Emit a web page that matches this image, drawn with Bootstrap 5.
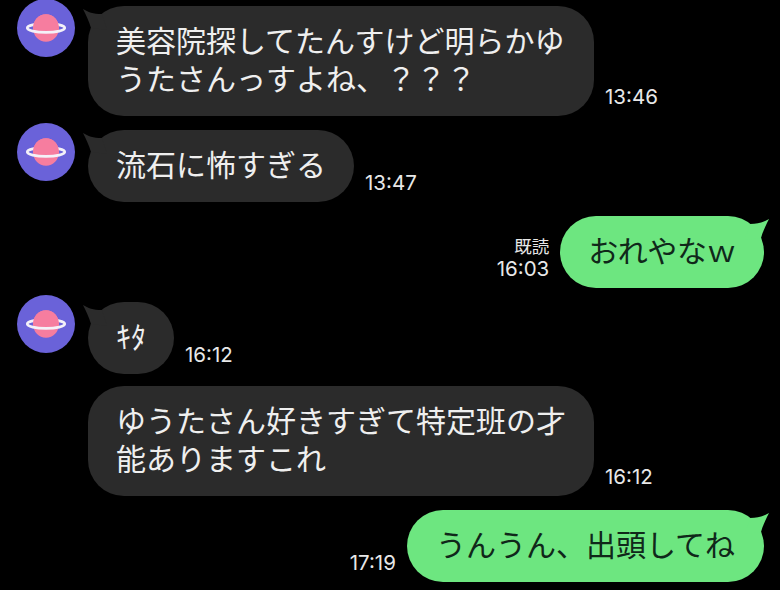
<!doctype html>
<html lang="ja">
<head>
<meta charset="utf-8">
<title>Chat</title>
<link rel="stylesheet" href="https://cdn.jsdelivr.net/npm/bootstrap@5.3.0/dist/css/bootstrap.min.css">
<style>
html,body{background:#000;margin:0;height:590px;overflow:hidden}
.chat-log{padding:6px 16px 0 17px;gap:14px;font-family:"Noto Sans CJK JP",sans-serif}
.chat-row.tight{margin-top:-2px}
.chat-avatar{width:58px;height:58px;flex:none;margin:-7px 13px 0 0}
.chat-spacer{width:71px;flex:none}
.chat-bubble{position:relative;font-size:30px;line-height:38px;padding:14px 28px 20px;border-radius:36px;flex:none}
.chat-bubble.in{background:#2b2b2b;color:#efefef;max-width:506px}
.chat-bubble.out{background:#6de680;color:#10281a;padding-left:29px;padding-right:29px}
.chat-bubble.out.snug{padding-left:28px;padding-right:28px;letter-spacing:-.45px}
.chat-tail{position:absolute;top:0;width:26px;height:30px}
.in .chat-tail{left:-6px}
.out .chat-tail{right:-6px}
.chat-time{font-family:Inter,"Liberation Sans",sans-serif;font-size:20.5px;line-height:22px;color:#e8e8e8;margin-bottom:8px}
.in + .chat-time{margin-left:11px}
.chat-time.mine{margin-right:11px;text-align:right}
.chat-read{font-family:"Noto Sans CJK JP",sans-serif;font-size:17.5px;line-height:22px;margin-bottom:1px}
</style>
</head>
<body>
<svg width="0" height="0" class="d-block">
<defs>
<symbol id="planet" viewBox="0 0 58 58">
<circle cx="29" cy="29" r="29" fill="#6a62d9"/>
<ellipse cx="29" cy="29" rx="13" ry="13.8" fill="#f67d9f"/>
<ellipse cx="29" cy="29" rx="18.7" ry="4.3" fill="none" stroke="#f4f1f8" stroke-width="2.8"/>
<path d="M16 29c0-7.600 5.800-13.800 13-13.800S42 21.400 42 29c0 .4 0 .9-.1 1.300-3.400.6-7.800 1-12.900 1s-9.500-.4-12.900-1c-.1-.4-.1-.9-.1-1.300z" fill="#f67d9f"/>
</symbol>
<symbol id="tail-in" viewBox="0 0 26 30"><path d="M1 3c5 3 10 5 19 5l5 16-16-2C7 15 4 9 1 3z" fill="#2b2b2b"/></symbol>
<symbol id="tail-out" viewBox="0 0 26 30"><path d="M25 3c-5 3-10 5-19 5L1 24l16-2c2-7 5-13 8-19z" fill="#6de680"/></symbol>
</defs>
</svg>
<main class="chat-log d-flex flex-column">
  <div class="chat-row d-flex align-items-end">
    <svg class="chat-avatar align-self-start"><use href="#planet"/></svg>
    <div class="chat-bubble in">美容院探してたんすけど明らかゆうたさんっすよね、？？？<svg class="chat-tail"><use href="#tail-in"/></svg></div>
    <div class="chat-time">13:46</div>
  </div>
  <div class="chat-row d-flex align-items-end">
    <svg class="chat-avatar align-self-start"><use href="#planet"/></svg>
    <div class="chat-bubble in">流石に怖すぎる<svg class="chat-tail"><use href="#tail-in"/></svg></div>
    <div class="chat-time">13:47</div>
  </div>
  <div class="chat-row d-flex align-items-end justify-content-end">
    <div class="chat-time mine"><div class="chat-read">既読</div>16:03</div>
    <div class="chat-bubble out snug">おれやなｗ<svg class="chat-tail"><use href="#tail-out"/></svg></div>
  </div>
  <div class="chat-row d-flex align-items-end">
    <svg class="chat-avatar align-self-start"><use href="#planet"/></svg>
    <div class="chat-bubble in">ｷﾀ<svg class="chat-tail"><use href="#tail-in"/></svg></div>
    <div class="chat-time">16:12</div>
  </div>
  <div class="chat-row tight d-flex align-items-end">
    <div class="chat-spacer"></div>
    <div class="chat-bubble in">ゆうたさん好きすぎて特定班の才能ありますこれ</div>
    <div class="chat-time">16:12</div>
  </div>
  <div class="chat-row d-flex align-items-end justify-content-end">
    <div class="chat-time mine">17:19</div>
    <div class="chat-bubble out">うんうん、出頭してね<svg class="chat-tail"><use href="#tail-out"/></svg></div>
  </div>
</main>
<script src="https://cdn.jsdelivr.net/npm/bootstrap@5.3.0/dist/js/bootstrap.bundle.min.js"></script>
</body>
</html>
